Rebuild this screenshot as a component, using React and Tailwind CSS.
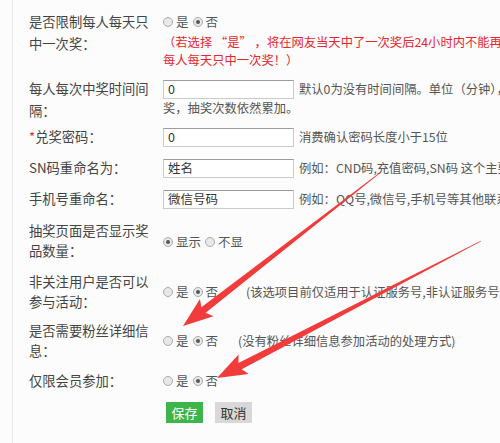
import React from "react";

const font = {
  fontFamily: '"Noto Sans CJK SC", "Noto Sans", sans-serif',
};

function Radio({ checked }) {
  return (
    <span className="inline-flex h-[10px] w-[10px] shrink-0 items-center justify-center rounded-full border border-[#aaa] bg-[#e8e8e8]">
      {checked && <span className="h-[4px] w-[4px] rounded-full bg-[#555]" />}
    </span>
  );
}

function RadioGroup({ options, value }) {
  return (
    <span className="inline-flex items-center whitespace-nowrap text-[12.5px]">
      {options.map((opt, i) => (
        <span
          key={opt}
          className={`inline-flex items-center gap-[3px] ${i > 0 ? "ml-[4px]" : ""}`}
        >
          <Radio checked={opt === value} />
          <span>{opt}</span>
        </span>
      ))}
    </span>
  );
}

function TextInput({ value }) {
  return (
    <span className="inline-flex h-[19px] w-[131px] shrink-0 items-center border border-[#cbcbcb] border-t-[#9c9c9c] bg-white px-[4px] text-[12.5px] leading-none text-[#333]">
      {value}
    </span>
  );
}

function Row({ label, children, className = "" }) {
  return (
    <div className={`flex items-center ${className}`}>
      <div className="w-[134px] shrink-0 leading-[20px]">{label}</div>
      <div className="min-w-0 flex-1 text-[12.3px] text-[#555]">{children}</div>
    </div>
  );
}

// tapered annotation arrow from tail to tip
function Arrow({ x1, y1, x2, y2 }) {
  const dx = x2 - x1;
  const dy = y2 - y1;
  const L = Math.sqrt(dx * dx + dy * dy);
  const angle = (Math.atan2(dy, dx) * 180) / Math.PI;
  const h = 26;
  const w = 7;
  const H = 22;
  const pts = [
    [0, -0.4],
    [L - h, -w / 2],
    [L - h - 4, -H / 2],
    [L, 0],
    [L - h - 4, H / 2],
    [L - h, w / 2],
    [0, 0.4],
  ]
    .map((p) => p.join(","))
    .join(" ");
  return (
    <polygon
      points={pts}
      fill="#f23b3b"
      transform={`translate(${x1} ${y1}) rotate(${angle})`}
    />
  );
}

export default function App() {
  return (
    <div
      className="relative h-[443px] w-[500px] overflow-hidden bg-[#fcfcfc] text-[13.3px] text-[#444]"
      style={font}
    >
      <div className="ml-[12px] h-full border-l border-[#e6e6e6] pl-[16px]">
        <div className="flex flex-col pt-[11px]">
          {/* row 1 */}
          <div className="flex items-start">
            <div className="w-[134px] shrink-0 leading-[22px]">
              是否限制每人每天只
              <br />
              中一次奖：
            </div>
            <div className="min-w-0 flex-1 whitespace-nowrap text-[12.3px]">
              <div className="flex h-[22px] items-center text-[#555]">
                <RadioGroup options={["是", "否"]} value="否" />
              </div>
              <div className="leading-[18px] text-[#e8262d]">
                （若选择 “是” ，将在网友当天中了一次奖后24小时内不能再玩
              </div>
              <div className="leading-[18px] text-[#e8262d]">
                每人每天只中一次奖！）
              </div>
            </div>
          </div>

          {/* row 2 */}
          <div className="mt-[9px] flex items-start">
            <div className="w-[134px] shrink-0 leading-[22px]">
              每人每次中奖时间间
              <br />
              隔：
            </div>
            <div className="min-w-0 flex-1 whitespace-nowrap text-[12.3px] text-[#555]">
              <div className="flex h-[22px] items-center gap-[5px]">
                <TextInput value="0" />
                <span>默认0为没有时间间隔。单位（分钟），如设置为1分钟则</span>
              </div>
              <div className="leading-[16px]">奖，抽奖次数依然累加。</div>
            </div>
          </div>

          {/* row 3 */}
          <Row
            className="mt-[5px]"
            label={
              <>
                <span className="text-[#e8262d]">*</span>兑奖密码：
              </>
            }
          >
            <div className="flex items-center gap-[5px] whitespace-nowrap">
              <TextInput value="0" />
              <span>消费确认密码长度小于15位</span>
            </div>
          </Row>

          <Row className="mt-[11px]" label="SN码重命名为：">
            <div className="flex items-center gap-[5px] whitespace-nowrap">
              <TextInput value="姓名" />
              <span>例如：CND码,充值密码,SN码 这个主要是用来</span>
            </div>
          </Row>

          <Row className="mt-[11px]" label="手机号重命名：">
            <div className="flex items-center gap-[5px] whitespace-nowrap">
              <TextInput value="微信号码" />
              <span>例如：QQ号,微信号,手机号等其他联系方式</span>
            </div>
          </Row>

          <Row
            className="mt-[12px]"
            label={
              <>
                抽奖页面是否显示奖
                <br />
                品数量：
              </>
            }
          >
            <RadioGroup options={["显示", "不显"]} value="显示" />
          </Row>

          <Row
            className="mt-[11px]"
            label={
              <>
                非关注用户是否可以
                <br />
                参与活动：
              </>
            }
          >
            <div className="flex items-center whitespace-nowrap">
              <RadioGroup options={["是", "否"]} value="否" />
              <span className="ml-[28px]">
                (该选项目前仅适用于认证服务号,非认证服务号体验
              </span>
            </div>
          </Row>

          <Row
            className="mt-[9px]"
            label={
              <>
                是否需要粉丝详细信
                <br />
                息：
              </>
            }
          >
            <div className="flex items-center whitespace-nowrap">
              <RadioGroup options={["是", "否"]} value="否" />
              <span className="ml-[20px]">(没有粉丝详细信息参加活动的处理方式)</span>
            </div>
          </Row>

          <Row className="mt-[10px]" label="仅限会员参加：">
            <RadioGroup options={["是", "否"]} value="否" />
          </Row>

          <div className="mt-[11px] flex items-center gap-[12px] pl-[137px]">
            <button className="h-[21px] w-[37px] bg-[#3db54a] text-[13px] leading-none text-white">
              保存
            </button>
            <button className="h-[21px] w-[37px] bg-[#d8d8d8] text-[13px] leading-none text-[#333]">
              取消
            </button>
          </div>
        </div>
      </div>

      <svg
        className="pointer-events-none absolute left-0 top-0"
        width="500"
        height="443"
        viewBox="0 0 500 443"
      >
        <Arrow x1={381} y1={172} x2={183} y2={326} />
        <Arrow x1={481} y1={241} x2={217} y2={378} />
      </svg>
    </div>
  );
}
